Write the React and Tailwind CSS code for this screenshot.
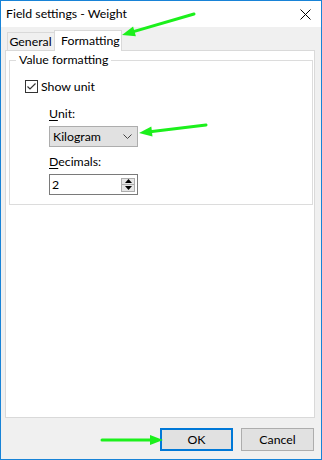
function Arrow({ from, to }) {
  const [x1, y1] = from;
  const [x2, y2] = to;
  const dx = x2 - x1;
  const dy = y2 - y1;
  const len = Math.hypot(dx, dy);
  const ux = dx / len;
  const uy = dy / len;
  const head = 13;
  const half = 5;
  const bx = x2 - ux * head;
  const by = y2 - uy * head;
  const pts = [
    [x2, y2],
    [bx - uy * half, by + ux * half],
    [bx + uy * half, by - ux * half],
  ]
    .map((p) => p.join(","))
    .join(" ");
  return (
    <g>
      <line x1={x1} y1={y1} x2={bx + ux * 2} y2={by + uy * 2} stroke="#1cf01c" strokeWidth="3" strokeLinecap="round" />
      <polygon points={pts} fill="#1cf01c" />
    </g>
  );
}

function App() {
  return (
    <div className="relative w-[322px] h-[460px] bg-[#f0f0f0] border border-[#1883d7] flex flex-col font-['Lato','Noto_Sans',sans-serif] text-[12.3px] leading-[16px] text-black">
      {/* title bar */}
      <div className="h-[26px] bg-white flex items-center justify-between pl-[5px] pr-[10px]">
        <span>Field settings - Weight</span>
        <svg width="11" height="11" viewBox="0 0 11 11">
          <path d="M0.5 0.5 L10.5 10.5 M10.5 0.5 L0.5 10.5" stroke="#000" strokeWidth="1" />
        </svg>
      </div>

      <div className="flex-1 flex flex-col pt-[3px] pl-[4px]">
        {/* tabs */}
        <div className="h-[20px] flex items-end pl-[2px]">
          <div className="w-[47px] h-[18px] border-l border-t border-[#d9d9d9] bg-[#f0f0f0] flex items-center justify-center pr-px">
            General
          </div>
          <div className="relative z-10 w-[68px] h-[21px] -mb-px border-l border-t border-r border-[#d9d9d9] bg-white flex items-center pl-[6px] pb-px">
            Formatting
          </div>
        </div>

        {/* tab page */}
        <div className="w-[310px] h-[368px] bg-white border border-[#d9d9d9] flex flex-col">
          <fieldset className="mt-px ml-[3px] mr-px border border-[#dcdcdc] pb-[9px]">
            <legend className="ml-[6px] px-[3px] leading-[16px]">Value formatting</legend>
            <label className="mt-[11px] ml-[15px] h-[15px] flex items-center gap-[3px]">
              <span className="w-[13px] h-[13px] border border-[#333333] bg-white flex items-center justify-center">
                <svg width="11" height="11" viewBox="0 0 11 11">
                  <path d="M1.5 5.5 L4 8 L9.5 2.5" stroke="#333" strokeWidth="1.2" fill="none" />
                </svg>
              </span>
              <span>Show unit</span>
            </label>

            <div className="ml-[39px] flex flex-col">
              <div className="mt-[12px]">
                <span className="underline underline-offset-2">U</span>nit:
              </div>
              <div className="mt-[4px] w-[89px] h-[21px] bg-[#e1e1e1] border border-[#adadad] flex items-center justify-between pl-[3px] pr-[5px]">
                <span>Kilogram</span>
                <svg width="9" height="5" viewBox="0 0 9 5">
                  <path d="M0.5 0.5 L4.5 4.5 L8.5 0.5" stroke="#444" strokeWidth="1" fill="none" />
                </svg>
              </div>
              <div className="mt-[7px]">
                <span className="underline underline-offset-2">D</span>ecimals:
              </div>
              <div className="mt-[4px] w-[89px] h-[21px] bg-white border border-[#7a7a7a] flex items-center justify-between pl-[2px] pr-[2px]">
                <span>2</span>
                <div className="flex flex-col w-[14px]">
                  <div className="h-[7px] bg-[#e6e6e6] border border-[#adadad] flex items-center justify-center">
                    <svg width="7" height="4" viewBox="0 0 7 4">
                      <path d="M0 4 L3.5 0 L7 4 Z" fill="#000" />
                    </svg>
                  </div>
                  <div className="h-[7px] bg-[#e6e6e6] border border-t-0 border-[#adadad] flex items-center justify-center">
                    <svg width="7" height="4" viewBox="0 0 7 4">
                      <path d="M0 0 L7 0 L3.5 4 Z" fill="#000" />
                    </svg>
                  </div>
                </div>
              </div>
            </div>
          </fieldset>
        </div>

        {/* buttons */}
        <div className="mt-[10px] flex justify-end gap-[8px] pr-[7px]">
          <button className="w-[73px] h-[23px] bg-[#e1e1e1] border-2 border-[#0078d7]">OK</button>
          <button className="w-[73px] h-[23px] bg-[#e1e1e1] border border-[#adadad]">Cancel</button>
        </div>
      </div>

      <svg className="absolute -left-px -top-px pointer-events-none" width="322" height="460">
        <Arrow from={[194, 14]} to={[122, 35]} />
        <Arrow from={[206, 125]} to={[139, 133]} />
        <Arrow from={[102, 440]} to={[163, 440]} />
      </svg>
    </div>
  );
}

export default App;
